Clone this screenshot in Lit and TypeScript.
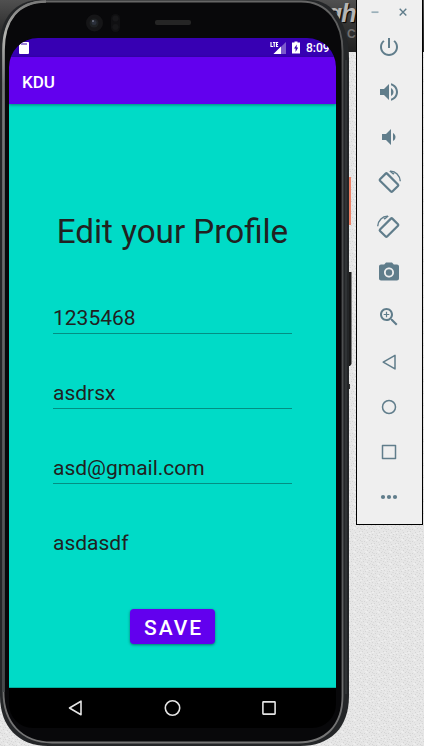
import { LitElement, html, css, svg } from "lit";
import { customElement } from "lit/decorators.js";

const stroke = (d: string, w = 1.5) =>
  svg`<path d=${d} fill="none" stroke="currentColor" stroke-width=${w} stroke-linejoin="round"/>`;
const fill = (d: string) => svg`<path d=${d} fill="currentColor"/>`;

const TOOLS = [
  { name: "Power", art: fill("M13 3h-2v10h2V3zm4.83 2.17l-1.42 1.42C17.99 7.86 19 9.81 19 12c0 3.87-3.13 7-7 7s-7-3.13-7-7c0-2.19 1.01-4.14 2.58-5.42L6.17 5.17C4.23 6.82 3 9.26 3 12c0 4.97 4.03 9 9 9s9-4.03 9-9c0-2.74-1.23-5.18-3.17-6.83z") },
  { name: "Volume up", art: fill("M3 9v6h4l5 5V4L7 9H3zm13.5 3c0-1.77-1.02-3.29-2.5-4.03v8.05c1.48-.73 2.5-2.25 2.5-4.02zM14 3.23v2.06c2.89.86 5 3.54 5 6.71s-2.11 5.85-5 6.71v2.06c4.01-.91 7-4.49 7-8.77s-2.99-7.86-7-8.77z") },
  { name: "Volume down", art: fill("M18.5 12c0-1.77-1.02-3.29-2.5-4.03v8.05c1.48-.73 2.5-2.25 2.5-4.02zM5 9v6h4l5 5V4L9 9H5z") },
  { name: "Rotate left", art: svg`<rect x="3.3" y="7.6" width="17.4" height="10" rx="1" fill="none" stroke="currentColor" stroke-width="2.2" transform="rotate(45 12 12.6)"/><path d="M13 1.3C18.700 1 22.800 5.200 23.300 11.200" fill="none" stroke="currentColor" stroke-width="1.400"/><path d="M11.500 .8l4.800 3.900 1.300-1.500z" fill="currentColor"/>` },
  { name: "Rotate right", art: svg`<rect x="3.300" y="7.600" width="17.400" height="10" rx="1" fill="none" stroke="currentColor" stroke-width="2.200" transform="rotate(-45 12 12.600)"/><path d="M11 1.300C5.300 1 1.200 5.200 .7 11.200" fill="none" stroke="currentColor" stroke-width="1.400"/><path d="M12.500 .8l-4.800 3.900-1.300-1.500z" fill="currentColor"/>` },
  { name: "Camera", art: svg`<circle cx="12" cy="12.500" r="3.200" fill="currentColor"/><path d="M9 2.500L7.200 4.500H4c-1.100 0-2 .9-2 2v12c0 1.100.9 2 2 2h16c1.100 0 2-.9 2-2v-12c0-1.100-.9-2-2-2h-3.200L15 2.500H9zm3 15c-2.760 0-5-2.240-5-5s2.240-5 5-5 5 2.240 5 5-2.240 5-5 5z" fill="currentColor"/>` },
  { name: "Zoom", art: fill("M15.5 14h-.79l-.28-.27C15.41 12.590 16 11.110 16 9.500 16 5.910 13.090 3 9.500 3S3 5.910 3 9.500 5.910 16 9.500 16c1.610 0 3.090-.59 4.230-1.570l.27.28v.79l5 4.990L20.490 19l-4.990-5zm-6 0C7.010 14 5 11.990 5 9.500S7.010 5 9.500 5 14 7.010 14 9.500 11.990 14 9.500 14zM12.300 8.900H10.100V6.700H8.900v2.200H6.700v1.200h2.200v2.200h1.200v-2.200h2.200z") },
  { name: "Back", art: stroke("M18 5.300v13.600L6.200 12.100z") },
  { name: "Home", art: svg`<circle cx="12" cy="12" r="6.500" fill="none" stroke="currentColor" stroke-width="1.500"/>` },
  { name: "Overview", art: stroke("M5.500 5.500h13v13h-13z") },
  { name: "More", art: svg`<g fill="currentColor"><circle cx="6" cy="12" r="2.100"/><circle cx="12" cy="12" r="2.100"/><circle cx="18" cy="12" r="2.100"/></g>` },
];

@customElement("emulator-toolbar")
class EmulatorToolbar extends LitElement {
  static styles = css`
    :host { display: flex; flex-direction: column; box-sizing: border-box; background: #efefef;
      border: 1px solid #000; border-top: 0; color: #607d8b; }
    .window { display: flex; height: 24px; }
    .window svg { width: 65px; height: 24px; display: block; }
    .tools { display: flex; flex-direction: column; align-items: flex-start; }
    .tool { display: flex; align-items: center; justify-content: center; height: 45px; width: 64px; }
    .tool svg { width: 24px; height: 24px; display: block; overflow: visible; }
  `;
  render() {
    return html`
      <div class="window"><svg viewBox="0 0 65 24">
        <path d="M14.500 12.200h7" stroke="#9aafb9" stroke-width="1.700"/>
        <path d="M42.700 8.800l6.600 6.600M49.300 8.800l-6.600 6.600" stroke="#607d8b" stroke-width="1.400"/>
      </svg></div>
      <div class="tools">${TOOLS.map(t => html`<div class="tool" role="button" aria-label=${t.name}><svg viewBox="0 0 24 24">${t.art}</svg></div>`)}</div>`;
  }
}

@customElement("profile-screen")
class ProfileScreen extends LitElement {
  static styles = css`
    :host { display: flex; flex-direction: column; overflow: hidden; border-radius: 29px 29px 24px 24px;
      font-family: Roboto, sans-serif; background: #000; }
    .status { height: 19px; flex: none; background: #3700b3; color: #fff; display: flex; align-items: center;
      padding-left: 10px; box-sizing: border-box; }
    .status svg { display: block; flex: none; }
    .battery { margin-left: 4px; }
    .spacer { flex: 1; }
    .clock { font-size: 12px; font-weight: 500; line-height: 19px; width: 30px; margin-left: 4px; white-space: nowrap; padding-top: 1px; }
    .appbar { height: 47px; flex: none; background: #6200ee; color: #fff; display: flex; align-items: center;
      padding: 3px 0 0 13px; box-sizing: border-box; font-size: 17px; font-weight: 500; position: relative;
      box-shadow: 0 1px 3px rgba(0,0,0,.4); }
    .form { height: 584px; flex: none; background: #00dbc7; color: #212121; display: flex; flex-direction: column;
      box-sizing: border-box; padding: 105px 44px 0; border-bottom: 1px solid #02ae9e; }
    .title { font-size: 33.200px; line-height: 46px; text-align: center; white-space: nowrap; margin: 0 -10px 46px; }
    .field { height: 33px; margin-bottom: 42px; line-height: 35px; font-size: 21px; box-sizing: border-box;
      border-bottom: 1px solid #038f83; flex: none; white-space: nowrap; }
    .field.last { border-color: transparent; margin-bottom: 50px; }
    .save { align-self: center; width: 85px; height: 35px; border-radius: 4px; background: #6200ee; color: #fff;
      display: flex; align-items: center; justify-content: center; font-size: 21px; font-weight: 500;
      letter-spacing: 1.900px; padding: 3px 0 0 3px; box-sizing: border-box; margin-right: 1px; box-shadow: 0 1px 3px rgba(0,0,0,.45); }
    .nav { height: 40px; flex: none; color: #e4e4e4; display: flex; justify-content: space-between; align-items: center;
      padding: 0 56px 0 55px; box-sizing: border-box; }
    .nav svg { width: 22px; height: 22px; display: block; }
  `;
  render() {
    return html`
      <div class="status">
        <svg width="10" height="12" viewBox="0 0 10 12"><path d="M3 0h6q1 0 1 1v10q0 1-1 1H1q-1 0-1-1V3z" fill="#fff"/><path d="M3 1v2M5 1v2M7 1v2" stroke="#3700b3"/></svg>
        <span class="spacer"></span>
        <svg width="16" height="14" viewBox="0 0 16 14">
          <path d="M16 1v12H3.500z" fill="#fff" fill-opacity=".35"/><path d="M11 5.500V13H3.500z" fill="#fff"/>
          <path d="M1 1v4.500H3M2.900 1.500H5.500M4.200 1.500V6M8.200 1.500H6.500V5.500H8.200M6.500 3.500H8" fill="none" stroke="#fff" stroke-width="1.150"/>
        </svg>
        <svg class="battery" width="12" height="13" viewBox="-2 0 12 13"><path d="M2.500 1.500V.5h3v1H8V12.500H0V1.500z" fill="#fff"/><path d="M4.800 3.500L2 7.500h1.600v3.500L6.200 6.500H4.600z" fill="#3700b3"/></svg>
        <span class="clock">8:09</span>
      </div>
      <div class="appbar">KDU</div>
      <div class="form">
        <div class="title">Edit your Profile</div>
        <div class="field">1235468</div>
        <div class="field">asdrsx</div>
        <div class="field">asd@gmail.com</div>
        <div class="field last">asdasdf</div>
        <div class="save">SAVE</div>
      </div>
      <div class="nav">
        <svg viewBox="0 0 22 22"><path d="M17 4.200v13.600L5.500 11z" fill="none" stroke="currentColor" stroke-width="1.600" stroke-linejoin="round"/></svg>
        <svg viewBox="0 0 22 22"><circle cx="11.500" cy="11" r="7.200" fill="none" stroke="currentColor" stroke-width="1.600"/></svg>
        <svg viewBox="0 0 22 22"><rect x="4.900" y="4.900" width="12.200" height="12.200" rx=".5" fill="none" stroke="currentColor" stroke-width="1.600"/></svg>
      </div>`;
  }
}

@customElement("app-root")
class AppRoot extends LitElement {
  static styles = css`
    :host { display: block; position: relative; width: 424px; height: 746px; overflow: hidden; background: #e5e5e5; }
    .wall, .frame { position: absolute; left: 0; top: 0; display: block; }
    .phone { position: absolute; left: 0; top: 0; width: 350px; height: 746px; box-sizing: border-box; padding: 38px 14px 18px 9px; }
    .banner { position: absolute; left: 326px; top: 0; width: 36px; height: 52px; overflow: hidden;
      font-family: "Liberation Sans", sans-serif; font-weight: bold; color: #b5b5b5; }
    .big { font-size: 25px; line-height: 27px; font-style: italic; height: 27px; letter-spacing: -1px; text-shadow: 1px 1px 1px #000; padding-left: 1px; }
    .small { font-size: 12px; line-height: 15px; color: #707070; margin-left: 21px; }
    profile-screen { width: 327px; height: 690px; position: relative; }
    emulator-toolbar { position: absolute; left: 356px; top: 0; width: 67px; height: 525px; }
  `;
  render() {
    return html`
      <svg class="wall" width="424" height="746">
        <defs>
          <pattern id="weave" width="12" height="12" patternUnits="userSpaceOnUse">
            <rect width="12" height="12" fill="#e6e6e6"/>
            <path d="M0 0h1v1H0zM4 1h1v1H4zM9 0h1v1H9zM2 3h1v1H2zM7 4h1v1H7zM11 3h1v1H11zM0 6h1v1H0zM5 7h1v1H5zM9 6h1v1H9zM3 9h1v1H3zM7 10h1v1H7zM11 9h1v1H11z" fill="#d4d4d4"/>
            <path d="M1 1h2v1H1zM6 2h1v1H6zM4 5h1v1H4zM8 8h2v1H8zM1 10h1v1H1zM10 11h1v1H10zM3 7h1v1H3z" fill="#dcdcdc"/>
            <path d="M6 0h2v1H6zM0 4h2v1H0zM9 5h2v1H9zM6 6h2v1H6zM1 8h1v1H1zM5 11h2v1H5z" fill="#eee"/>
          </pattern>
          <linearGradient id="head" x2="0" y2="1"><stop stop-color="#505050"/><stop offset=".5" stop-color="#333"/><stop offset="1" stop-color="#202020"/></linearGradient>
        </defs>
        <rect width="424" height="746" fill="url(#weave)"/>
        <rect width="424" height="52" fill="url(#head)"/>
      </svg>
      <div class="banner"><div class="big">gh</div><div class="small">C</div></div>
      <svg class="frame" width="356" height="746">
        <defs>
          <linearGradient id="edge" x2="0" y2="1"><stop stop-color="#666"/><stop offset=".12" stop-color="#4a4b4c"/><stop offset=".7" stop-color="#505254"/><stop offset="1" stop-color="#777"/></linearGradient>
          <linearGradient id="shine" gradientUnits="userSpaceOnUse" x1="0" y1="0" x2="0" y2="700"><stop stop-color="#777"/><stop offset=".05" stop-color="#b4b4b0"/><stop offset=".12" stop-color="#77797a"/><stop offset="1" stop-color="#45484a"/></linearGradient>
        </defs>
        <rect x="347" y="177" width="4" height="48" fill="#ee8064"/>
        <path d="M348 272h3.500v92l-1.500 2h-2z" fill="#1b1b1b"/>
        <rect x="348" y="384" width="2" height="5" fill="#333"/>
        <path d="M40 0H310C333 0 349 24 349 58V696C349 728 330 746 300 746H48C18 746 0 726 0 696V44C0 18 16 0 40 0z" fill="#242628"/>
        <path d="M46 1.500H301C328 1.500 342.500 23 342.500 51V696C342.500 726 325 742.500 298 742.500H52C21 742.500 3.500 722 3.500 692V50C3.500 20 18 1.500 46 1.500z" fill="#08080a" stroke="url(#edge)" stroke-width="1.800"/>
        <path d="M3.500 692V50C3.500 20 18 1.500 46 1.500" fill="none" stroke="url(#shine)" stroke-width="2.600"/>
        <path d="M346 60V694" stroke="#303335" stroke-width="2"/>
        <circle cx="94.500" cy="23" r="8.500" fill="#151517"/><circle cx="94" cy="23" r="4.500" fill="#1e2123"/><circle cx="94" cy="22.500" r="2.500" fill="#2b303b"/><circle cx="93" cy="21" r=".8" fill="#a2a8bb"/>
        <rect x="111" y="14" width="9" height="18" rx="4.500" fill="#101012"/><circle cx="115.500" cy="18.500" r="3" fill="#171719"/><circle cx="115.500" cy="27" r="3" fill="#171719"/>
        <rect x="155" y="20" width="36" height="5" rx="2" fill="#252525"/>
      </svg>
      <div class="phone"><profile-screen></profile-screen></div>
      <emulator-toolbar></emulator-toolbar>`;
  }
}
